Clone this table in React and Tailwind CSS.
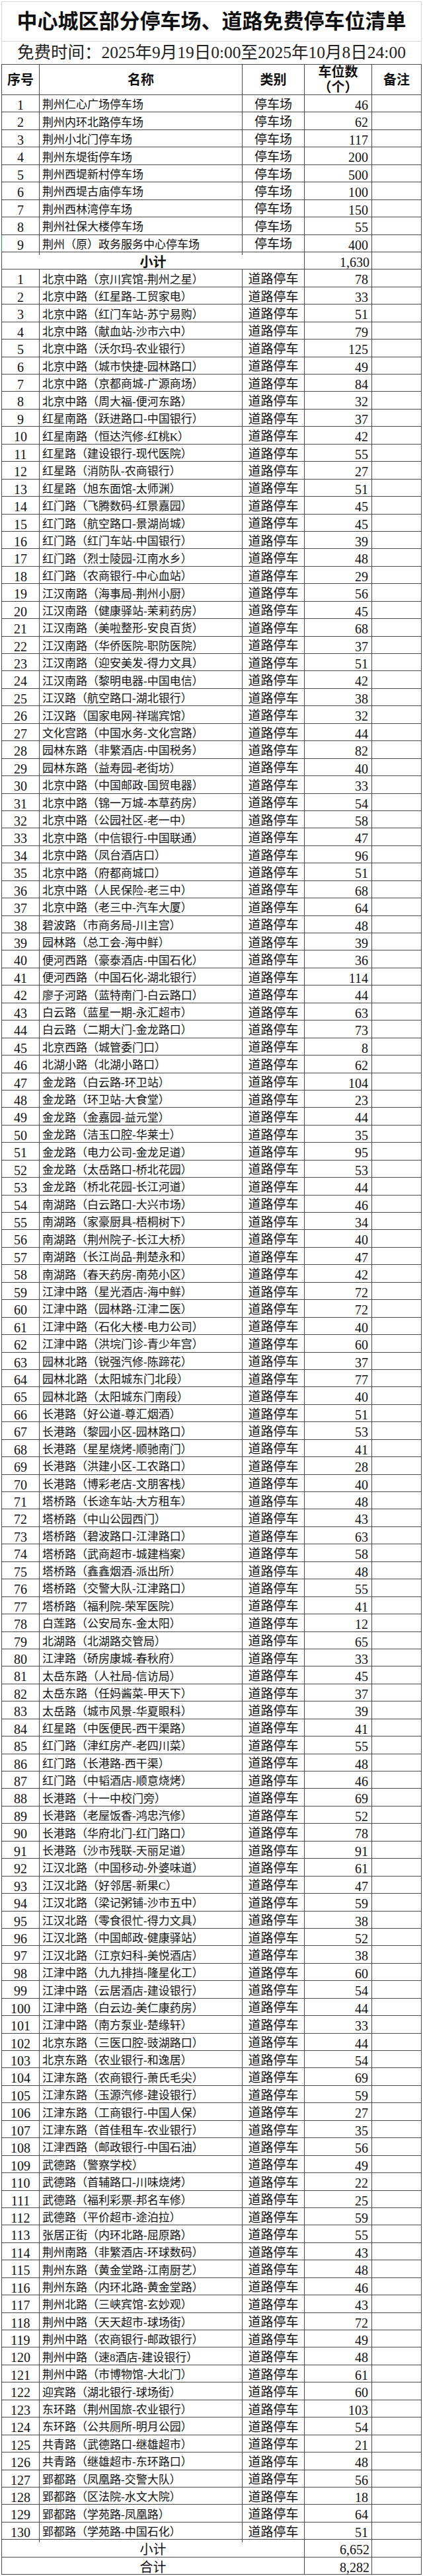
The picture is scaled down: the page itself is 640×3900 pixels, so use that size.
import React from 'react';

const lots = [
    ['荆州仁心广场停车场', 46],
    ['荆州内环北路停车场', 62],
    ['荆州小北门停车场', 117],
    ['荆州东堤街停车场', 200],
    ['荆州西堤新村停车场', 500],
    ['荆州西堤古庙停车场', 100],
    ['荆州西林湾停车场', 150],
    ['荆州社保大楼停车场', 55],
    ['荆州（原）政务服务中心停车场', 400],
];

const roads = [
    ['北京中路（京川宾馆-荆州之星）', 78],
    ['北京中路（红星路-工贸家电）', 33],
    ['北京中路（红门车站-苏宁易购）', 51],
    ['北京中路（献血站-沙市六中）', 79],
    ['北京中路（沃尔玛-农业银行）', 125],
    ['北京中路（城市快捷-园林路口）', 49],
    ['北京中路（京都商城-广源商场）', 84],
    ['北京中路（周大福-便河东路）', 32],
    ['红星南路（跃进路口-中国银行）', 37],
    ['红星南路（恒达汽修-红桃K）', 42],
    ['红星路（建设银行-现代医院）', 55],
    ['红星路（消防队-农商银行）', 27],
    ['红星路（旭东面馆-太师渊）', 51],
    ['红门路（飞腾数码-红景嘉园）', 45],
    ['红门路（航空路口-景湖尚城）', 45],
    ['红门路（红门车站-中国银行）', 39],
    ['红门路（烈士陵园-江南水乡）', 48],
    ['红门路（农商银行-中心血站）', 29],
    ['江汉南路（海事局-荆州小厨）', 56],
    ['江汉南路（健康驿站-茉莉药房）', 45],
    ['江汉南路（美啦整形-安良百货）', 68],
    ['江汉南路（华侨医院-职防医院）', 37],
    ['江汉南路（迎安美发-得力文具）', 51],
    ['江汉南路（黎明电器-中国电信）', 42],
    ['江汉路（航空路口-湖北银行）', 38],
    ['江汉路（国家电网-祥瑞宾馆）', 32],
    ['文化宫路（中国水务-文化宫路）', 44],
    ['园林东路（非繁酒店-中国税务）', 82],
    ['园林东路（益寿园-老街坊）', 40],
    ['北京中路（中国邮政-国贸电器）', 33],
    ['北京中路（锦一万城-本草药房）', 54],
    ['北京中路（公园社区-老一中）', 58],
    ['北京中路（中信银行-中国联通）', 47],
    ['北京中路（凤台酒店口）', 96],
    ['北京中路（府都商城口）', 51],
    ['北京中路（人民保险-老三中）', 68],
    ['北京中路（老三中-汽车大厦）', 64],
    ['碧波路（市商务局-川主宫）', 48],
    ['园林路（总工会-海中鲜）', 39],
    ['便河西路（豪泰酒店-中国石化）', 36],
    ['便河西路（中国石化-湖北银行）', 114],
    ['廖子河路（蓝特南门-白云路口）', 44],
    ['白云路（蓝星一期-永汇超市）', 63],
    ['白云路（二期大门-金龙路口）', 73],
    ['北京西路（城管委门口）', 8],
    ['北湖小路（北湖小路口）', 62],
    ['金龙路（白云路-环卫站）', 104],
    ['金龙路（环卫站-大食堂）', 23],
    ['金龙路（金嘉园-益元堂）', 44],
    ['金龙路（洁玉口腔-华莱士）', 35],
    ['金龙路（电力公司-金龙足道）', 95],
    ['金龙路（太岳路口-桥北花园）', 53],
    ['金龙路（桥北花园-长江河道）', 44],
    ['南湖路（白云路口-大兴市场）', 46],
    ['南湖路（家豪厨具-梧桐树下）', 34],
    ['南湖路（荆州院子-长江大桥）', 40],
    ['南湖路（长江尚品-荆楚永和）', 47],
    ['南湖路（春天药房-南苑小区）', 42],
    ['江津中路（星光酒店-海中鲜）', 72],
    ['江津中路（园林路-江津二医）', 72],
    ['江津中路（石化大楼-电力公司）', 40],
    ['江津中路（洪垸门诊-青少年宫）', 60],
    ['园林北路（锐强汽修-陈蹄花）', 37],
    ['园林北路（太阳城东门北段）', 77],
    ['园林北路（太阳城东门南段）', 40],
    ['长港路（好公道-尊汇烟酒）', 51],
    ['长港路（黎园小区-园林路口）', 53],
    ['长港路（星星烧烤-顺驰南门）', 41],
    ['长港路（洪建小区-工农路口）', 28],
    ['长港路（博彩老店-文朋客栈）', 40],
    ['塔桥路（长途车站-大方租车）', 48],
    ['塔桥路（中山公园西门）', 43],
    ['塔桥路（碧波路口-江津路口）', 63],
    ['塔桥路（武商超市-城建档案）', 58],
    ['塔桥路（鑫鑫烟酒-派出所）', 48],
    ['塔桥路（交警大队-江津路口）', 55],
    ['塔桥路（福利院-荣军医院）', 41],
    ['白莲路（公安局东-金太阳）', 12],
    ['北湖路（北湖路交管局）', 65],
    ['江津路（硚房康城-春秋府）', 33],
    ['太岳东路（人社局-信访局）', 45],
    ['太岳东路（任妈酱菜-甲天下）', 37],
    ['太岳路（城市风景-华夏眼科）', 39],
    ['红星路（中医便民-西干渠路）', 41],
    ['红门路（津红房产-老四川菜）', 55],
    ['红门路（长港路-西干渠）', 48],
    ['红门路（中韬酒店-顺意烧烤）', 46],
    ['长港路（十一中校门旁）', 69],
    ['长港路（老屋饭香-鸿忠汽修）', 52],
    ['长港路（华府北门-红门路口）', 78],
    ['长港路（沙市残联-天丽足道）', 91],
    ['江汉北路（中国移动-外婆味道）', 61],
    ['江汉北路（好邻居-新果C）', 47],
    ['江汉北路（梁记粥铺-沙市五中）', 59],
    ['江汉北路（零食很忙-得力文具）', 38],
    ['江汉北路（中国邮政-健康驿站）', 52],
    ['江汉北路（江京妇科-美悦酒店）', 38],
    ['江津中路（九九排挡-隆星化工）', 60],
    ['江津中路（云居酒店-建设银行）', 54],
    ['江津中路（白云边-美仁康药房）', 44],
    ['江津中路（南方泵业-楚缘轩）', 33],
    ['北京东路（三医口腔-豉湖路口）', 44],
    ['北京东路（农业银行-和逸居）', 54],
    ['江津东路（农商银行-萧氏毛尖）', 69],
    ['江津东路（玉源汽修-建设银行）', 59],
    ['江津东路（工商银行-中国人保）', 27],
    ['江津东路（首佳租车-农业银行）', 35],
    ['江津西路（邮政银行-中国石油）', 56],
    ['武德路（警察学校）', 49],
    ['武德路（首辅路口-川味烧烤）', 22],
    ['武德路（福利彩票-邦名车修）', 25],
    ['武德路（平价超市-途泊拉）', 59],
    ['张居正街（内环北路-屈原路）', 55],
    ['荆州南路（非繁酒店-环球数码）', 43],
    ['荆州东路（黄金堂路-江南厨艺）', 48],
    ['荆州东路（内环北路-黄金堂路）', 46],
    ['荆州北路（三峡宾馆-玄妙观）', 43],
    ['荆州中路（天天超市-球场街）', 72],
    ['荆州中路（农商银行-邮政银行）', 49],
    ['荆州中路（速8酒店-建设银行）', 48],
    ['荆州中路（市博物馆-大北门）', 61],
    ['迎宾路（湖北银行-球场街）', 60],
    ['东环路（荆州国旅-农业银行）', 103],
    ['东环路（公共厕所-明月公园）', 54],
    ['共青路（武德路口-继雄超市）', 21],
    ['共青路（继雄超市-东环路口）', 48],
    ['郢都路（凤凰路-交警大队）', 56],
    ['郢都路（区法院-水文大院）', 18],
    ['郢都路（学苑路-凤凰路）', 64],
    ['郢都路（学苑路-中国石化）', 51],
];

function Row({ no, name, type, count, green }) {
    return (
        <div className="grid grid-cols-[58px_307px_94px_102px_75px] h-[26.44px] border-b border-[#4a4a4a]">
            <div className={`flex items-center justify-center border-l border-r border-[#4a4a4a] text-[20px] ${green ? 'border-l-[#2e8b57]' : ''}`}>
                {no}
            </div>
            <div className="flex items-center border-r border-[#4a4a4a] pl-[4px] text-[17px] whitespace-nowrap overflow-hidden">
                {name}
            </div>
            <div className="flex items-center justify-center border-r border-[#4a4a4a] text-[19px] whitespace-nowrap">
                {type}
            </div>
            <div className="flex items-center justify-end border-r border-[#4a4a4a] pr-[5px] text-[20px]">
                {count}
            </div>
            <div className="border-r border-[#4a4a4a]"></div>
        </div>
    );
}

function SumRow({ label, value, bold }) {
    return (
        <div className="grid grid-cols-[459px_102px_75px] h-[26.44px] border-b border-[#4a4a4a]">
            <div className={`flex items-center justify-center border-l border-r border-[#4a4a4a] text-[20px] ${bold ? 'font-bold' : ''}`}>
                {label}
            </div>
            <div className="flex items-center justify-end border-r border-[#4a4a4a] pr-[3px] text-[20px]">
                {value}
            </div>
            <div className="border-r border-[#4a4a4a]"></div>
        </div>
    );
}

export default function App() {
    return (
        <div className="w-[640px] bg-white pt-[2px] pl-[2px] text-[#111] font-['Liberation_Serif','Noto_Sans_CJK_SC',serif]">
            <div className="w-[636px] h-[61px] flex items-center justify-center border-x border-t border-b border-[#d9d9d9]">
                <h1 className="text-[31px] font-bold leading-none whitespace-nowrap">
                    中心城区部分停车场、道路免费停车位清单
                </h1>
            </div>
            <div className="w-[636px] h-[34px] flex items-center justify-center border-x border-[#d9d9d9]">
                <p className="text-[25.5px] leading-none text-[#222] whitespace-nowrap">
                    免费时间：2025年9月19日0:00至2025年10月8日24:00
                </p>
            </div>

            <div className="w-[636px]">
                <div className="grid grid-cols-[58px_307px_94px_102px_75px] h-[47px] border-t border-b border-[#4a4a4a] font-bold text-[20px]">
                    <div className="flex items-center justify-center border-l border-r border-[#4a4a4a]">序号</div>
                    <div className="flex items-center justify-center border-r border-[#4a4a4a]">名称</div>
                    <div className="flex items-center justify-center border-r border-[#4a4a4a]">类别</div>
                    <div className="flex flex-col items-center justify-center border-r border-[#4a4a4a] leading-[23px]">
                        <span>车位数</span>
                        <span>（个）</span>
                    </div>
                    <div className="flex items-center justify-center border-r border-[#4a4a4a]">备注</div>
                </div>

                {lots.map(([name, count], i) => (
                    <Row key={'p' + i} no={i + 1} name={name} type="停车场" count={count} green={i === 8} />
                ))}
                <SumRow label="小计" value="1,630" bold />

                {roads.map(([name, count], i) => (
                    <Row key={'r' + i} no={i + 1} name={name} type="道路停车" count={count} />
                ))}
                <SumRow label="小计" value="6,652" />
                <SumRow label="合计" value="8,282" />
            </div>
        </div>
    );
}
